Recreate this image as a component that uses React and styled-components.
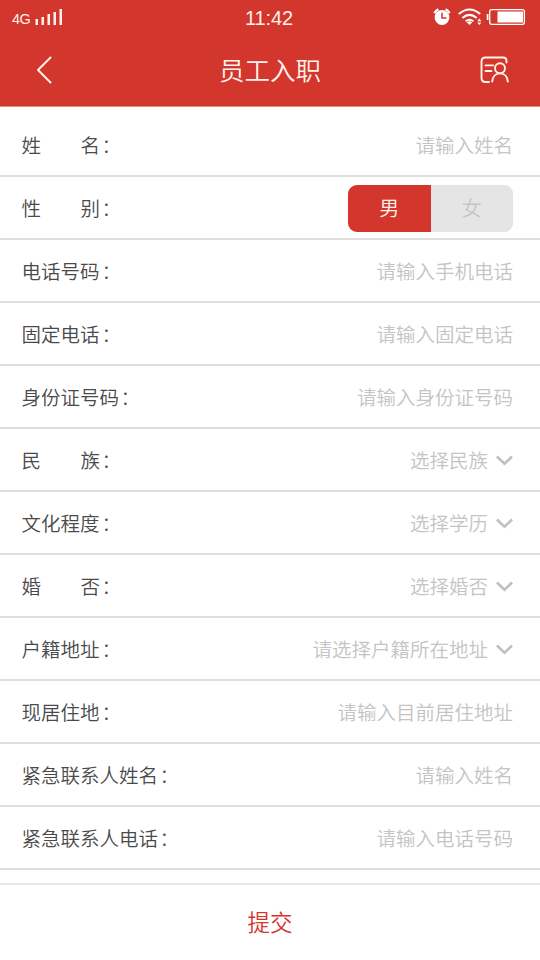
import React, { useState } from 'react';
import styled, { createGlobalStyle } from 'styled-components';

const GlobalStyle = createGlobalStyle`
  * { box-sizing: border-box; }
  body {
    margin: 0;
    background: #fff;
    font-family: "Noto Sans CJK SC", sans-serif;
    font-weight: 350;
  }
  button { font: inherit; border: 0; padding: 0; background: none; }
`;

const Screen = styled.div`
  display: flex;
  flex-direction: column;
  width: 540px;
  height: 960px;
  overflow: hidden;
  background: #fff;
`;

const Header = styled.header`
  height: 107px;
  flex: none;
  background: #d3362d;
  color: #fff3ea;
  border-bottom: 1px solid #e58e88;
`;

const StatusBar = styled.div`
  display: grid;
  grid-template-columns: 1fr auto 1fr;
  height: 35px;
  padding: 0 14px 0 12px;
  font-family: "Liberation Sans", sans-serif;
  font-weight: 400;
`;

const Signal = styled.div`
  display: flex;
  align-items: flex-start;
  gap: 5px;
  padding-top: 9px;
`;

const Network = styled.span`
  font-size: 14.5px;
  line-height: 21px;
  letter-spacing: -0.5px;
`;

const Clock = styled.span`
  font-size: 20px;
  line-height: 36px;
  letter-spacing: -0.1px;
`;

const Indicators = styled.div`
  display: flex;
  justify-content: flex-end;
  padding-top: 7px;
`;

const TitleBar = styled.div`
  display: grid;
  grid-template-columns: 60px 1fr 60px;
  align-items: center;
  height: 70px;
`;

const Title = styled.h1`
  margin: 0;
  padding-bottom: 3px;
  font-size: 25.5px;
  font-weight: 350;
  line-height: 36px;
  text-align: center;
`;

const IconButton = styled.button`
  display: flex;
  justify-content: ${(p) => (p.$end ? 'flex-end' : 'flex-start')};
  padding-left: ${(p) => (p.$end ? 0 : '36px')};
  padding-right: ${(p) => (p.$end ? '30px' : 0)};
  color: inherit;
`;

const Form = styled.main`
  padding-top: 7px;
  flex: none;
`;

const Row = styled.div`
  display: flex;
  align-items: center;
  justify-content: space-between;
  height: 63px;
  padding: 1px 27px 0 21.5px;
  border-bottom: 2px solid #dedede;
  font-size: 19.5px;
  line-height: 30px;
`;

const Label = styled.label`
  display: flex;
  color: #4a4a4a;
`;

const LabelText = styled.span`
  display: flex;
  justify-content: space-between;
  min-width: 78.5px;
`;

const Colon = styled.span`
  padding-left: 1.5px;
  font-weight: 300;
`;

const Field = styled.div`
  display: flex;
  align-items: center;
  gap: 8px;
  color: #c4c4c4;
`;

const Segmented = styled.div`
  display: flex;
  width: 165px;
  height: 47px;
  border-radius: 9px;
  overflow: hidden;
  background: #e5e5e5;
`;

const Segment = styled.button`
  flex: 1;
  font-size: 20px;
  background: ${(p) => (p.$active ? '#d3362d' : '#e5e5e5')};
  color: ${(p) => (p.$active ? '#fff3ea' : '#c6c6c6')};
`;

const Footer = styled.footer`
  display: flex;
  align-items: center;
  justify-content: center;
  flex: 1;
  margin-top: 13px;
  padding-bottom: 4px;
  border-top: 2px solid #e8e8e8;
`;

const Submit = styled.button`
  color: #d3362d;
  font-size: 22.5px;
  line-height: 32px;
`;

const SignalIcon = () => (
  <svg width="28" height="17" viewBox="0 0 28 17" fill="#fff3ea">
    <rect x="0.5" y="10" width="2.5" height="6" />
    <rect x="6.5" y="8" width="2.5" height="8" />
    <rect x="12.5" y="5" width="2.5" height="11" />
    <rect x="18.5" y="3" width="2.5" height="13" />
    <rect x="24.5" y="0" width="2.5" height="16" />
  </svg>
);

const StatusIcons = () => (
  <svg width="93" height="20" viewBox="433 7 93 20" fill="none" stroke="#fff">
    <circle cx="442" cy="17.5" r="7.4" fill="#fff" stroke="none" />
    <path d="M434.4 13.2a8 8 0 0 1 4-3.8M445.6 9.4a8 8 0 0 1 4 3.8" strokeWidth="2.3" />
    <path d="M442 12.7v5.3h4.5" stroke="#d3362d" strokeWidth="1.5" />
    <path d="M458.8 14.1q10.7-9.2 21.4 0M462.3 18q7.2-6.2 14.4 0M465.6 21.2q3.9-3 7.8 0" strokeWidth="2" />
    <path d="M466.7 22.2q2.8-2 5.6 0L469.5 25z" fill="#fff" stroke="none" />
    <path d="M477.2 21.2l2.1-2.6 2.1 2.6zM477.2 22.4l2.1 2.6 2.1-2.6z" fill="#fff" stroke="none" />
    <rect x="489.7" y="9.7" width="34.7" height="14.6" rx="2" strokeWidth="1.3" />
    <rect x="497.5" y="11.5" width="25.5" height="11" fill="#fff" stroke="none" />
    <path d="M487.6 14v6" strokeWidth="1.7" />
  </svg>
);

const BackIcon = () => (
  <svg width="17" height="28" viewBox="0 0 17 28" fill="none" stroke="currentColor" strokeWidth="2" strokeLinecap="round" strokeLinejoin="round">
    <path d="M14.5 1.5L2 14l12.5 12.5" />
  </svg>
);

const RecordIcon = () => (
  <svg width="30" height="28" viewBox="480 56 30 28" fill="none" stroke="currentColor" strokeWidth="1.9" strokeLinecap="round">
    <path d="M489 82h-3.500q-4 0-4-4V61.500q0-4 4-4h17.500q3.500 0 3.500 3.500v1.500" />
    <path d="M485.500 65.400h7.500M485.500 71h6" />
    <circle cx="500" cy="68.200" r="5" />
    <path d="M492.200 81.500c.4-4.800 3.300-8.100 7.800-8.100s7.400 3.300 7.800 8.100" />
  </svg>
);

const ChevronIcon = () => (
  <svg width="17" height="12" viewBox="0 0 17 12" fill="none" stroke="#c0c0c0" strokeWidth="2.6">
    <path d="M.9 2.500l7.600 7.200 7.600-7.200" />
  </svg>
);

const ROWS = [
  { label: '姓名', hint: '请输入姓名' },
  { label: '性别', gender: true },
  { label: '电话号码', hint: '请输入手机电话' },
  { label: '固定电话', hint: '请输入固定电话' },
  { label: '身份证号码', hint: '请输入身份证号码' },
  { label: '民族', hint: '选择民族', select: true },
  { label: '文化程度', hint: '选择学历', select: true },
  { label: '婚否', hint: '选择婚否', select: true },
  { label: '户籍地址', hint: '请选择户籍所在地址', select: true },
  { label: '现居住地', hint: '请输入目前居住地址' },
  { label: '紧急联系人姓名', hint: '请输入姓名' },
  { label: '紧急联系人电话', hint: '请输入电话号码' },
];

function GenderSwitch() {
  const [value, setValue] = useState('男');
  return (
    <Segmented>
      {['男', '女'].map((option) => (
        <Segment key={option} $active={option === value} onClick={() => setValue(option)}>
          {option}
        </Segment>
      ))}
    </Segmented>
  );
}

function FormRow({ label, hint, select, gender }) {
  return (
    <Row>
      <Label>
        <LabelText>
          {label.length === 2 ? [...label].map((c) => <span key={c}>{c}</span>) : label}
        </LabelText>
        <Colon>：</Colon>
      </Label>
      {gender ? (
        <GenderSwitch />
      ) : (
        <Field>
          <span>{hint}</span>
          {select && <ChevronIcon />}
        </Field>
      )}
    </Row>
  );
}

export default function App() {
  return (
    <Screen>
      <GlobalStyle />
      <Header>
        <StatusBar>
          <Signal>
            <Network>4G</Network>
            <SignalIcon />
          </Signal>
          <Clock>11:42</Clock>
          <Indicators>
            <StatusIcons />
          </Indicators>
        </StatusBar>
        <TitleBar>
          <IconButton aria-label="返回">
            <BackIcon />
          </IconButton>
          <Title>员工入职</Title>
          <IconButton $end aria-label="员工资料">
            <RecordIcon />
          </IconButton>
        </TitleBar>
      </Header>
      <Form>
        {ROWS.map((row) => (
          <FormRow key={row.label} {...row} />
        ))}
      </Form>
      <Footer>
        <Submit>提交</Submit>
      </Footer>
    </Screen>
  );
}
